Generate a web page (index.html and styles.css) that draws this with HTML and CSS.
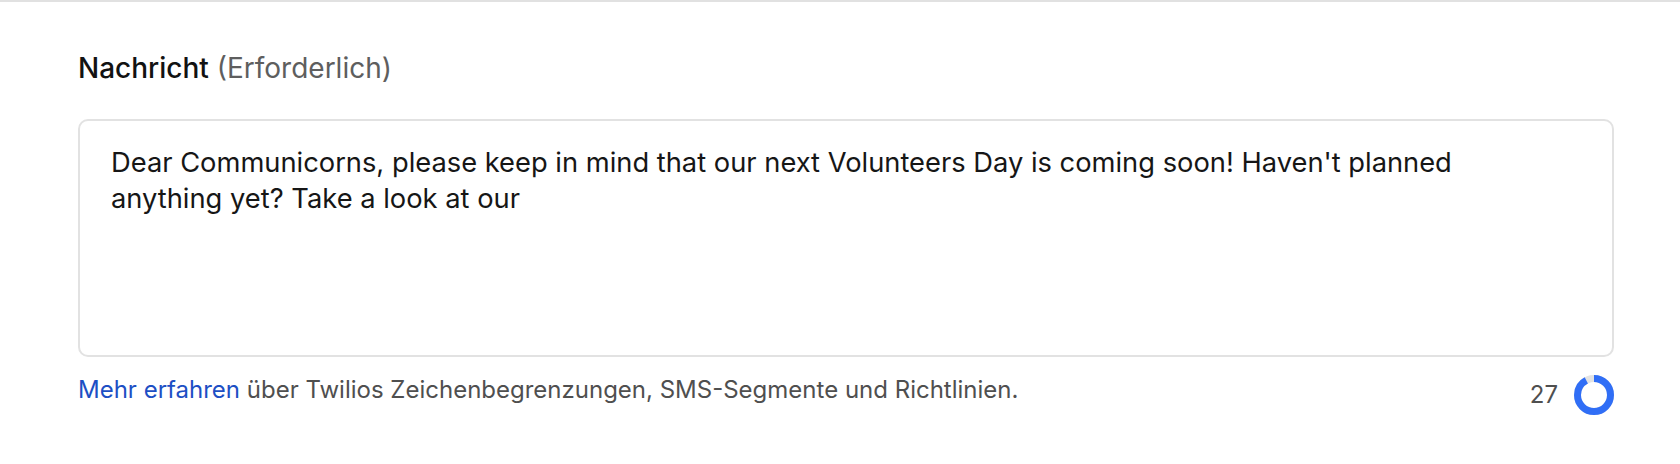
FILE: index.html
```html
<!DOCTYPE html>
<html lang="de">
<head>
<meta charset="utf-8">
<title>Nachricht</title>
<link rel="stylesheet" href="styles.css">
</head>
<body>
<div class="topline"></div>
<div class="field">
  <label class="label"><span class="label-main">Nachricht</span> <span class="label-req">(Erforderlich)</span></label>
  <div class="textarea">Dear Communicorns, please keep in mind that our next Volunteers Day is coming soon! Haven't planned<br>anything yet? Take a look at our</div>
  <div class="help-row">
    <p class="help"><a class="link" href="#">Mehr erfahren</a> über Twilios Zeichenbegrenzungen, SMS-Segmente und Richtlinien.</p>
    <div class="counter">
      <span class="count">27</span>
      <svg class="donut" width="40" height="40" viewBox="0 0 40 40">
        <circle cx="20" cy="20" r="16.5" fill="none" stroke="#e3e3e3" stroke-width="7"/>
        <circle cx="20" cy="20" r="16.5" fill="none" stroke="#306ef6" stroke-width="7" stroke-dasharray="95 104" transform="rotate(-90 20 20)"/>
      </svg>
    </div>
  </div>
</div>
</body>
</html>
```
FILE: styles.css
```css
html, body {
  margin: 0;
  padding: 0;
  background: #ffffff;
}
body {
  font-family: Inter, "Noto Sans", "Liberation Sans", sans-serif;
  color: #161616;
}
.topline {
  height: 2px;
  background: #e1e1e1;
}
.field {
  padding: 48px 66px 0 78px;
}
.label {
  display: block;
  font-size: 28px;
  line-height: 36px;
}
.label-main {
  font-weight: 500;
  color: #121212;
}
.label-req {
  font-weight: 400;
  color: #5e5e5e;
}
.textarea {
  margin-top: 33px;
  height: 238px;
  box-sizing: border-box;
  border: 2px solid #e2e2e2;
  border-radius: 10px;
  padding: 24px 31px;
  font-size: 27.3px;
  line-height: 36px;
  color: #161616;
}
.help-row {
  display: flex;
  justify-content: space-between;
  align-items: flex-start;
  margin-top: 18px;
}
.help {
  margin: 0;
  font-size: 24px;
  line-height: 30px;
  color: #4f4f4f;
}
.link {
  color: #1d4fc4;
  text-decoration: none;
}
.counter {
  display: flex;
  align-items: center;
  gap: 16px;
}
.count {
  font-size: 24px;
  line-height: 30px;
  color: #4f4f4f;
}
.donut {
  display: block;
}
```
